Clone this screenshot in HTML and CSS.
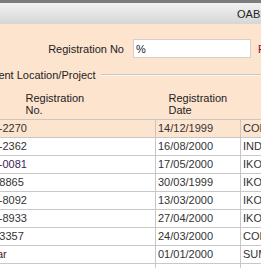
FILE: index.html
```html
<html>
  <head>
    <link rel="stylesheet" href="styles.css">
  </head>
  <body>
    <div class="page">
      <div class="titlebar">
        <span class="title">OABS - Registration Search</span>
      </div>

      <div class="search-row">
        <label class="field-label">Registration No</label>
        <input class="field-input" type="text" value="%">
        <span class="field-label-red">From Date</span>
      </div>

      <div class="legend">
        <span class="legend-text">Current Location/Project</span>
        <span class="legend-line"></span>
      </div>

      <table class="results">
        <colgroup>
          <col class="col-no">
          <col class="col-date">
          <col class="col-loc">
        </colgroup>
        <tr class="head">
          <th class="th-no">Registration<br>No.</th>
          <th class="th-date">Registration<br>Date</th>
          <th></th>
        </tr>
        <tr class="selected">
          <td>OAB/1999-2270</td>
          <td>14/12/1999</td>
          <td>CORPORATE</td>
        </tr>
        <tr>
          <td>OAB/2000-2362</td>
          <td>16/08/2000</td>
          <td>INDIVIDUAL</td>
        </tr>
        <tr>
          <td class="visited">OAB/2000-0081</td>
          <td>17/05/2000</td>
          <td>IKON</td>
        </tr>
        <tr>
          <td>OAB1999-8865</td>
          <td>30/03/1999</td>
          <td>IKON</td>
        </tr>
        <tr>
          <td>OAB/2000-8092</td>
          <td>13/03/2000</td>
          <td>IKON</td>
        </tr>
        <tr>
          <td>OAB/2000-8933</td>
          <td>27/04/2000</td>
          <td>IKON</td>
        </tr>
        <tr>
          <td>OAB2000-3357</td>
          <td>24/03/2000</td>
          <td>CORPORATE</td>
        </tr>
        <tr>
          <td class="visited-red">OAB/Kumar</td>
          <td>01/01/2000</td>
          <td>SUMMIT</td>
        </tr>
        <tr>
          <td>OAB/2000-1104</td>
          <td>05/02/2000</td>
          <td>IKON</td>
        </tr>
      </table>
    </div>
  </body>
</html>
```

FILE: styles.css
```css
body {
  margin: 0;
  overflow: hidden;
  background-color: #fde4cf;
  font-family: "Liberation Sans", Arial, sans-serif;
  font-size: 11px;
  color: #222;
}

.page {
  width: 420px;
  margin-left: -55px;
}

.titlebar {
  height: 21px;
  border-top: 3px solid #7d7d7d;
  background: linear-gradient(#f2f2f2, #d6d6d6);
  padding-left: 292px;
  line-height: 23px;
  white-space: nowrap;
  overflow: hidden;
}

.title {
  color: #222;
}

.search-row {
  display: flex;
  align-items: center;
  margin-top: 15px;
  white-space: nowrap;
}

.field-label {
  width: 179px;
  text-align: right;
  margin-right: 9px;
}

.field-input {
  width: 118px;
  height: 19px;
  box-sizing: border-box;
  border: 1px solid #d8d0c8;
  background: white;
  font-family: "Liberation Sans", Arial, sans-serif;
  font-size: 11px;
  padding: 0 2px;
  margin: 0 7px 0 0;
  color: #222;
}

.field-label-red {
  color: #a00000;
}

.legend {
  display: flex;
  align-items: center;
  margin-top: 10px;
  padding-left: 32px;
  height: 13px;
}

.legend-text {
  white-space: nowrap;
  margin-right: 5px;
}

.legend-line {
  flex: 1;
  border-top: 1px solid #c8c8c8;
  border-bottom: 1px solid #fff4ea;
}

.results {
  border-collapse: collapse;
  table-layout: fixed;
  width: 395px;
  margin-top: 1px;
  font-family: "Liberation Sans", Arial, sans-serif;
  font-size: 11px;
  color: #333;
}

.col-no {
  width: 210px;
}

.col-date {
  width: 85px;
}

.col-loc {
  width: 100px;
}

.results th {
  font-weight: normal;
  text-align: left;
  vertical-align: bottom;
  height: 37px;
  padding: 0 0 3px 0;
  line-height: 12px;
  color: #222;
  border-bottom: 1px solid #c8c8c8;
  white-space: nowrap;
}

.results .th-no {
  padding-left: 80px;
}

.results .th-date {
  padding-left: 13px;
}

.results td {
  height: 18px;
  padding: 0 0 0 2px;
  border: 1px solid #c8c8c8;
  background: white;
  white-space: nowrap;
  overflow: hidden;
}

.results tr.selected td {
  background: #fde4cf;
}

.visited {
  color: #3a1f5c;
}

.visited-red {
  color: #4a1a22;
}
```
